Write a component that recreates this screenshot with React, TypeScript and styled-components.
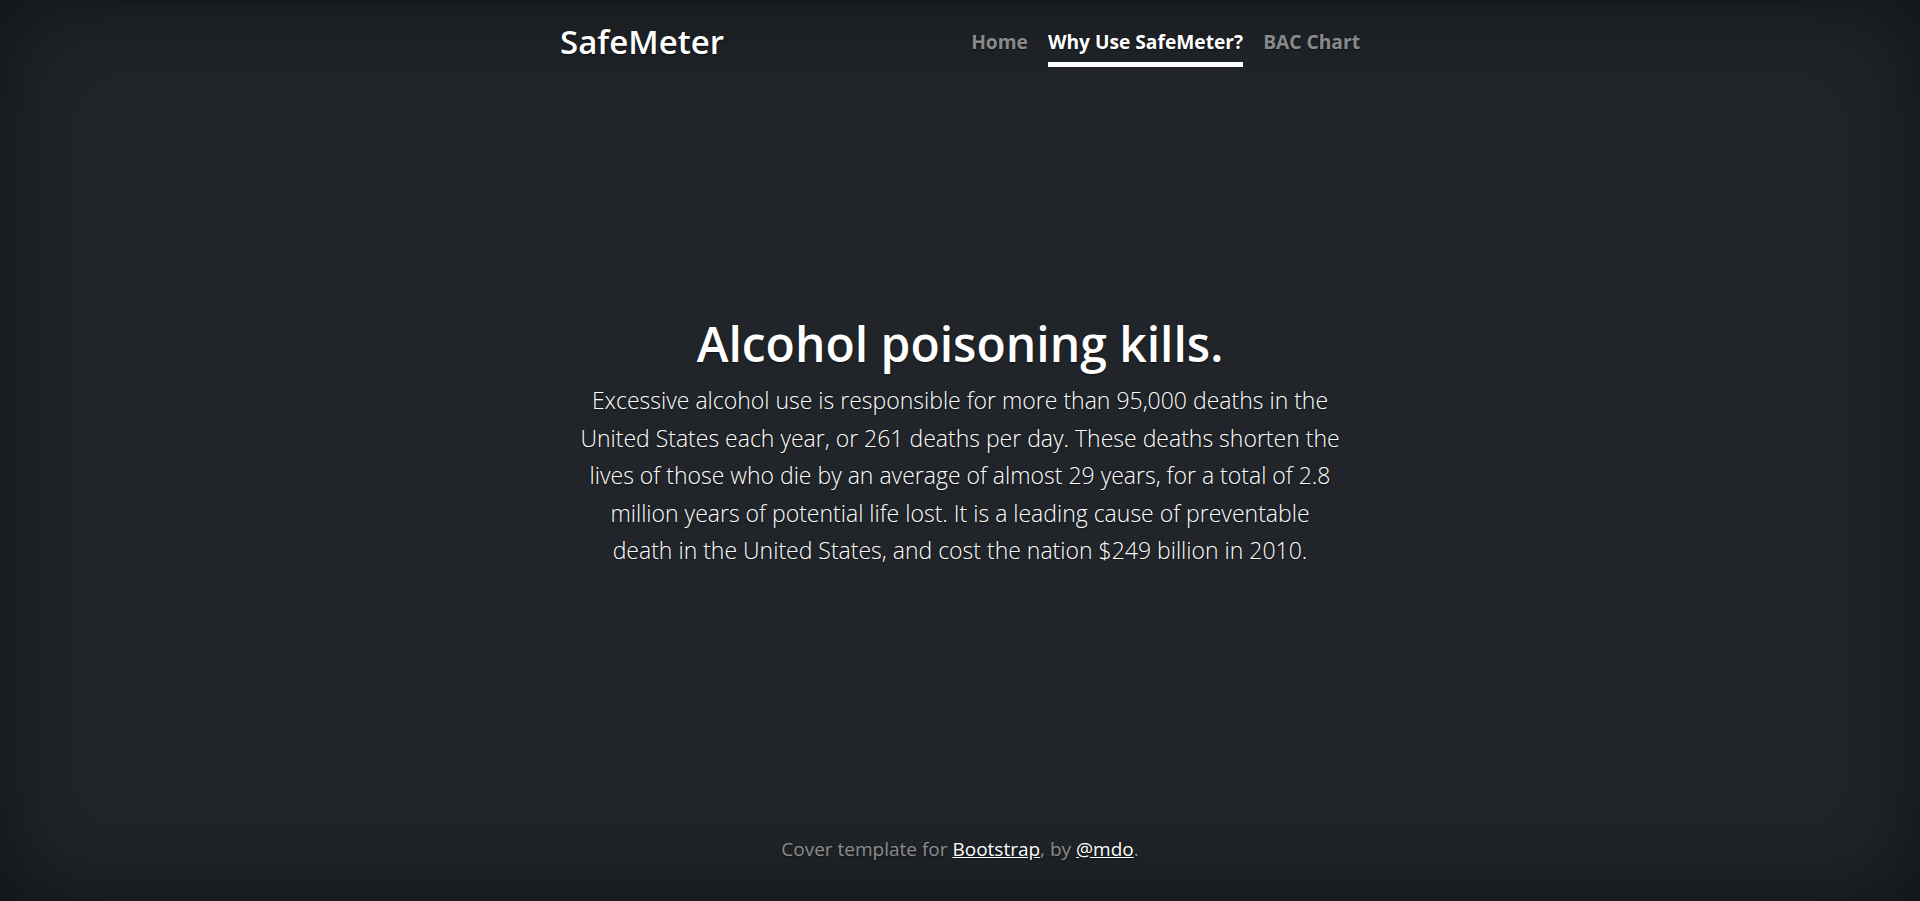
import React from 'react';
import styled, { createGlobalStyle } from 'styled-components';

const GlobalStyle = createGlobalStyle`
  html, body, #root {
    height: 100%;
  }
  body {
    margin: 0;
    background-color: #212529;
    box-shadow: inset 0 2px 0 #17191c, inset 0 0 100px rgba(0, 0, 0, .5);
    color: #fff;
    font-family: "Open Sans", "Noto Sans", sans-serif;
    text-shadow: 0 1px 2px rgba(0, 0, 0, .5);
    text-align: center;
  }
  *, *::before, *::after {
    box-sizing: border-box;
  }
`;

// page column
const Cover = styled.div`
  display: flex;
  flex-direction: column;
  height: 100%;
  max-width: 840px;
  margin: 0 auto;
  padding: 22px 20px 18px;
`;

// masthead
const Masthead = styled.header`
  display: flex;
  justify-content: space-between;
  align-items: flex-start;
`;

const Brand = styled.h3`
  margin: 0;
  font-size: 33px;
  font-weight: 600;
  line-height: 1.2;
`;

const Nav = styled.nav`
  display: flex;
  gap: 20px;
  padding-top: 1px;
`;

const NavLink = styled.a<{ $active?: boolean }>`
  padding: 5px 0;
  font-size: 19.2px;
  font-weight: 700;
  line-height: 1.5;
  text-decoration: none;
  color: ${(p) => (p.$active ? '#fff' : 'rgba(255, 255, 255, .5)')};
  border-bottom: 5px solid ${(p) => (p.$active ? '#fff' : 'transparent')};
  cursor: pointer;
`;

// middle
const Main = styled.main`
  flex: 1;
  display: flex;
  flex-direction: column;
  justify-content: center;
  padding: 3px 20px 0;
`;

const Heading = styled.h1`
  margin: 0 0 10px;
  font-size: 48px;
  font-weight: 600;
  line-height: 1.2;
`;

const Lead = styled.p`
  margin: 0 0 20px;
  font-size: 23px;
  font-weight: 300;
  line-height: 37.5px;
`;

// footer
const Footer = styled.footer`
  color: rgba(255, 255, 255, .5);
  font-size: 19px;
  line-height: 1.5;

  p {
    margin: 0 0 20px;
  }
`;

const FootLink = styled.a`
  color: #fff;
  text-decoration: underline;
`;

function App() {
  return (
    <>
      <GlobalStyle />
      <Cover>
        <Masthead>
          <Brand>SafeMeter</Brand>
          <Nav>
            <NavLink href="#">Home</NavLink>
            <NavLink href="#" $active>Why Use SafeMeter?</NavLink>
            <NavLink href="#">BAC Chart</NavLink>
          </Nav>
        </Masthead>

        <Main>
          <Heading>Alcohol poisoning kills.</Heading>
          <Lead>
            Excessive alcohol use is responsible for more than 95,000 deaths in the United States each year,
            or 261 deaths per day. These deaths shorten the lives of those who die by an average of almost 29
            years, for a total of 2.8 million years of potential life lost. It is a leading cause of
            preventable death in the United States, and cost the nation $249 billion in 2010.
          </Lead>
        </Main>

        <Footer>
          <p>
            Cover template for <FootLink href="#">Bootstrap</FootLink>, by <FootLink href="#">@mdo</FootLink>.
          </p>
        </Footer>
      </Cover>
    </>
  );
}

export default App;
